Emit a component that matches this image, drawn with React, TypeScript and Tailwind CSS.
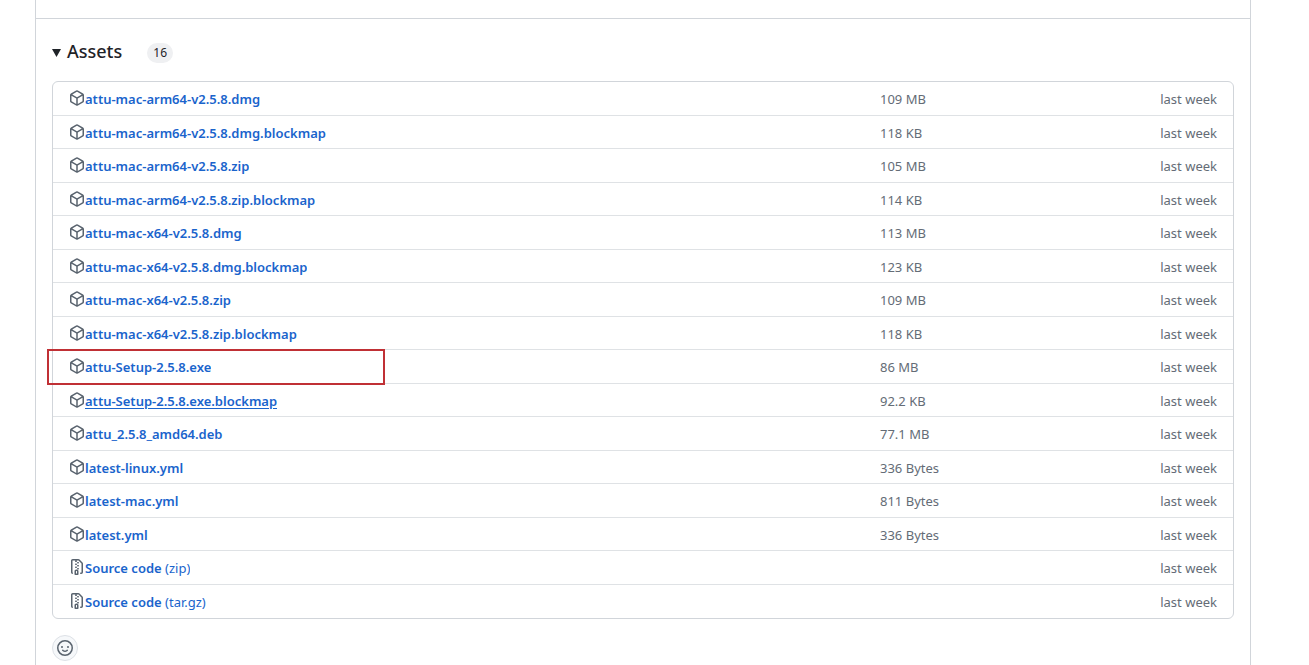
import clsx from 'clsx';

type Asset = {
  name: string;
  suffix?: string;
  size?: string;
  highlighted?: boolean;
  underlined?: boolean;
};

const assets: Asset[] = [
  { name: 'attu-mac-arm64-v2.5.8.dmg', size: '109 MB' },
  { name: 'attu-mac-arm64-v2.5.8.dmg.blockmap', size: '118 KB' },
  { name: 'attu-mac-arm64-v2.5.8.zip', size: '105 MB' },
  { name: 'attu-mac-arm64-v2.5.8.zip.blockmap', size: '114 KB' },
  { name: 'attu-mac-x64-v2.5.8.dmg', size: '113 MB' },
  { name: 'attu-mac-x64-v2.5.8.dmg.blockmap', size: '123 KB' },
  { name: 'attu-mac-x64-v2.5.8.zip', size: '109 MB' },
  { name: 'attu-mac-x64-v2.5.8.zip.blockmap', size: '118 KB' },
  { name: 'attu-Setup-2.5.8.exe', size: '86 MB', highlighted: true },
  { name: 'attu-Setup-2.5.8.exe.blockmap', size: '92.2 KB', underlined: true },
  { name: 'attu_2.5.8_amd64.deb', size: '77.1 MB' },
  { name: 'latest-linux.yml', size: '336 Bytes' },
  { name: 'latest-mac.yml', size: '811 Bytes' },
  { name: 'latest.yml', size: '336 Bytes' },
  { name: 'Source code', suffix: '(zip)' },
  { name: 'Source code', suffix: '(tar.gz)' },
];

const icons = {
  package:
    'm8.878.392 5.25 3.045c.54.314.872.89.872 1.514v6.098a1.75 1.75 0 0 1-.872 1.514l-5.25 3.045a1.75 1.75 0 0 1-1.756 0l-5.25-3.045A1.75 1.75 0 0 1 1 11.049V4.951c0-.624.332-1.201.872-1.514L7.122.392a1.75 1.75 0 0 1 1.756 0ZM7.875 1.69l-4.63 2.685L8 7.133l4.755-2.758-4.63-2.685a.248.248 0 0 0-.25 0ZM2.5 5.677v5.372c0 .09.047.171.125.216l4.625 2.683V8.432Zm6.25 8.271 4.625-2.683a.25.25 0 0 0 .125-.216V5.677L8.75 8.432Z',
  fileZip:
    'M3.5 1.75v11.5c0 .09.048.173.126.217a.75.75 0 0 1-.752 1.298A1.748 1.748 0 0 1 2 13.25V1.75C2 .784 2.784 0 3.75 0h5.586c.464 0 .909.185 1.237.513l2.914 2.914c.329.328.513.773.513 1.237v8.586A1.75 1.75 0 0 1 12.25 15h-.5a.75.75 0 0 1 0-1.5h.5a.25.25 0 0 0 .25-.25V4.664a.25.25 0 0 0-.073-.177L9.513 1.573a.25.25 0 0 0-.177-.073H7.25a.75.75 0 0 1 0 1.5h-.5a.75.75 0 0 1 0-1.5h-3a.25.25 0 0 0-.25.25Zm3.75 8.75h.5c.966 0 1.75.784 1.75 1.75v3a.75.75 0 0 1-.75.75h-2.5a.75.75 0 0 1-.75-.75v-3c0-.966.784-1.75 1.75-1.75ZM6 5.25a.75.75 0 0 1 .75-.75h.5a.75.75 0 0 1 0 1.5h-.5A.75.75 0 0 1 6 5.25Zm.75 2.25h.5a.75.75 0 0 1 0 1.5h-.5a.75.75 0 0 1 0-1.5ZM8 6.75A.75.75 0 0 1 8.75 6h.5a.75.75 0 0 1 0 1.5h-.5A.75.75 0 0 1 8 6.75ZM8.75 3h.5a.75.75 0 0 1 0 1.5h-.5a.75.75 0 0 1 0-1.5ZM8 9.75A.75.75 0 0 1 8.75 9h.5a.75.75 0 0 1 0 1.5h-.5A.75.75 0 0 1 8 9.75Zm-1 2.5v2.25h1v-2.25a.25.25 0 0 0-.25-.25h-.5a.25.25 0 0 0-.25.25Z',
  smiley:
    'M8 0a8 8 0 1 1 0 16A8 8 0 0 1 8 0ZM1.5 8a6.5 6.5 0 1 0 13 0 6.5 6.5 0 0 0-13 0Zm3.82 1.636a.75.75 0 0 1 1.038.175l.007.009c.103.118.22.222.35.31.264.178.683.37 1.285.37.602 0 1.02-.192 1.285-.371.13-.088.247-.192.35-.31l.007-.008a.75.75 0 0 1 1.222.87c-.22.3-.4.46-.73.68-.63.418-1.37.638-2.127.629-.946 0-1.652-.308-2.126-.63a3.331 3.331 0 0 1-.735-.687.75.75 0 0 1 .183-1.044ZM12 7a1 1 0 1 1-2 0 1 1 0 0 1 2 0ZM5 8a1 1 0 1 1 0-2 1 1 0 0 1 0 2Z',
};

const Icon = ({ name, className }: { name: keyof typeof icons; className?: string }) => (
  <svg viewBox="0 0 16 16" fill="currentColor" aria-hidden="true" className={clsx('size-4 shrink-0', className)}>
    <path d={icons[name]} />
  </svg>
);

const AssetRow = ({ asset }: { asset: Asset }) => {
  return (
    <li className="relative flex border-t border-[#dfe2e5] px-4 pt-[7px] pb-1.5 first:border-t-0 even:not-last:pb-[5px]">
      <div className="flex min-w-0 flex-1">
        <Icon name={asset.suffix ? 'fileZip' : 'package'} className="mt-px text-[#59636e]" />
        <a
          href="#"
          className={clsx(
            'truncate text-[#1a64cc] hover:underline',
            asset.underlined && 'underline underline-offset-2',
          )}
        >
          <span className="font-semibold">{asset.name}</span>
          {asset.suffix && <span> {asset.suffix}</span>}
        </a>
      </div>
      <div className="flex w-[337px] shrink-0 justify-between text-[#646c76]">
        <span>{asset.size}</span>
        <span>last week</span>
      </div>
      {asset.highlighted && (
        <div className="pointer-events-none absolute -top-px -left-1.5 z-10 h-9 w-[338px] border-2 border-[#c03035]" />
      )}
    </li>
  );
};

const App = () => {
  return (
    <div className="h-screen overflow-hidden bg-white pr-[58px] pl-[35px] font-['Noto_Sans','Open_Sans',sans-serif] text-[13px] leading-5 text-[#1f2328]">
      <main className="min-h-full border-x border-[#d1d5da]">
        <div className="h-[19px] border-b border-[#d1d5da]" />
        <div className="px-4 pt-5">
          <details open>
            <summary className="flex cursor-pointer list-none items-end">
              <svg className="mr-1.5 mb-1.5 h-2 w-[9px]" viewBox="0 0 9 8" fill="currentColor" aria-hidden="true">
                <path d="M0 0h9L4.5 8z" />
              </svg>
              <h3 className="text-lg leading-6 font-medium">Assets</h3>
              <span className="ml-[25px] rounded-full bg-[#eff0f2] px-1.5 text-xs leading-5">16</span>
            </summary>
            <ul className="mt-[18px] rounded-md border border-[#d1d5da]">
              {assets.map((asset) => (
                <AssetRow key={asset.name + asset.suffix} asset={asset} />
              ))}
            </ul>
          </details>
          <button
            type="button"
            aria-label="Add your reaction"
            className="mt-4 flex size-[26px] items-center justify-center rounded-full border border-[#dde1e6] bg-[#f6f8fa] text-[#59636e]"
          >
            <Icon name="smiley" />
          </button>
        </div>
      </main>
    </div>
  );
};

export default App;
